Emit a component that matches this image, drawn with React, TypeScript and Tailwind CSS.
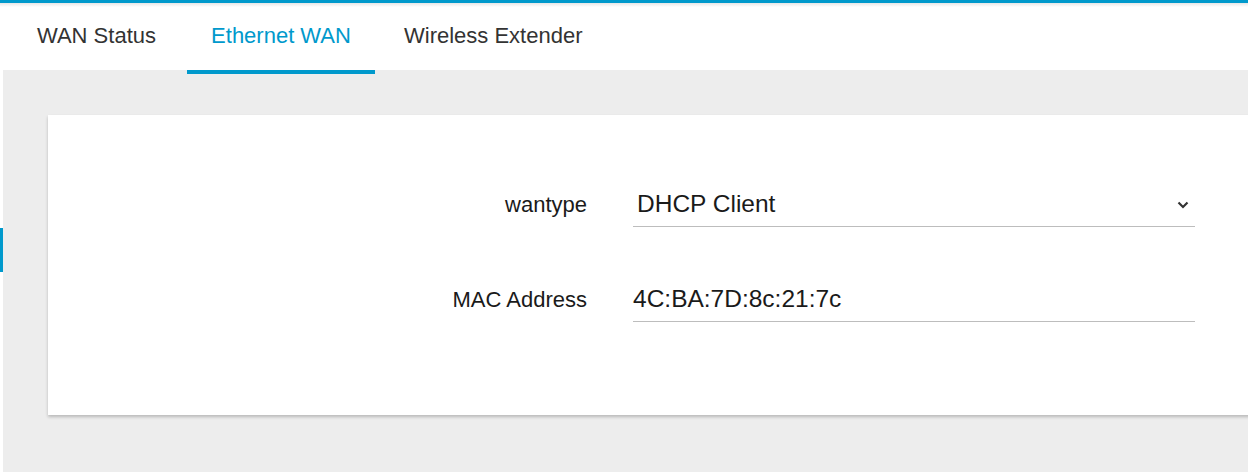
export default function App() {
  return (
    <div
      className="w-[1248px] h-[472px] overflow-hidden bg-white flex flex-col"
      style={{ fontFamily: '"Liberation Sans", Arial, sans-serif' }}
    >
      {/* top accent line */}
      <div className="h-[3px] bg-[#0099cc] shrink-0" />

      {/* Tabs */}
      <div className="h-[67px] shrink-0 flex items-stretch bg-white relative bg-gradient-to-b from-[#e6e6e6] via-white to-white [background-size:100%_8px] bg-no-repeat">
        <div className="pl-[37px] pr-[31px] flex items-center text-[22px] text-[#333] pb-[3px]">
          WAN Status
        </div>
        <div className="relative w-[188px] justify-center flex items-center text-[22px] text-[#0099cc] pb-[3px]">
          Ethernet WAN
          <div className="absolute left-0 right-0 -bottom-[4px] h-[4px] bg-[#0099cc] z-10" />
        </div>
        <div className="pl-[29px] flex items-center text-[22px] text-[#333] pb-[3px]">
          Wireless Extender
        </div>
      </div>

      {/* Body */}
      <div className="flex flex-1">
        {/* sidebar edge */}
        <div className="w-[3px] shrink-0 bg-white flex flex-col">
          <div className="h-[158px]" />
          <div className="h-[44px] bg-[#0099cc]" />
        </div>

        <div className="flex-1 bg-[#ededed] pl-[45px] pt-[45px]">
          <div className="w-[1300px] bg-white shadow-[0_2px_3px_rgba(0,0,0,0.22)] pt-[67px] pb-[93px] flex flex-col gap-[50px]">
            {/* wantype */}
            <div className="flex items-center">
              <div className="w-[539px] text-right text-[22px] text-[#1a1a1a]">wantype</div>
              <div className="ml-[46px] w-[562px] h-[45px] border-b border-[#bdbdbd] flex items-center justify-between pl-[4px] pr-[6px]">
                <span className="text-[24.5px] text-[#1a1a1a]">DHCP Client</span>
                <svg width="12" height="8" viewBox="0 0 12 8" className="mt-[1px]">
                  <path d="M1.5 1.5 L6 6 L10.5 1.5" fill="none" stroke="#333" strokeWidth="2.2" />
                </svg>
              </div>
            </div>

            {/* MAC Address */}
            <div className="flex items-center">
              <div className="w-[539px] text-right text-[22px] text-[#1a1a1a]">MAC Address</div>
              <div className="ml-[46px] w-[562px] h-[45px] border-b border-[#bdbdbd] flex items-center">
                <span className="text-[24.5px] text-[#1a1a1a]">4C:BA:7D:8c:21:7c</span>
              </div>
            </div>
          </div>
        </div>
      </div>
    </div>
  );
}
